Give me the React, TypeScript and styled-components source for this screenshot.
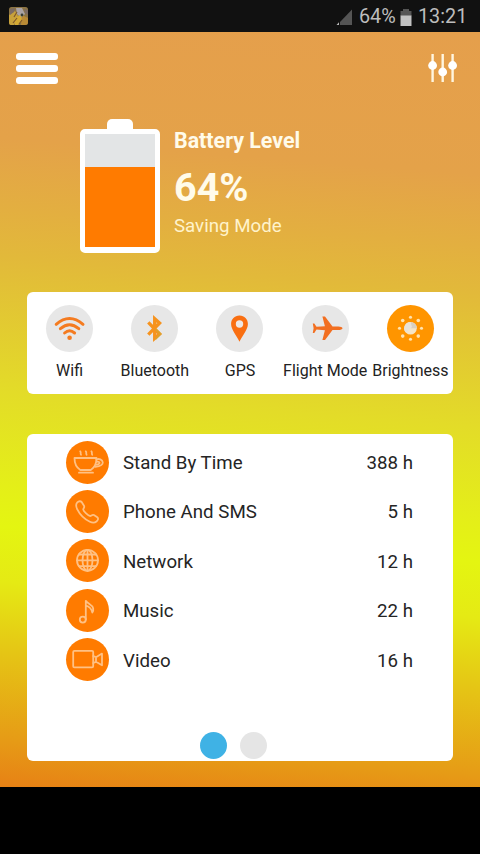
import React from 'react';
import styled, { createGlobalStyle } from 'styled-components';

const GlobalStyle = createGlobalStyle`
  * { box-sizing: border-box; }
  body {
    margin: 0;
    background: #000;
    font-family: Roboto, "Liberation Sans", sans-serif;
  }
  svg { display: block; }
`;

const Phone = styled.div`
  width: 480px;
  height: 854px;
  display: flex;
  flex-direction: column;
  background: #000;
  overflow: hidden;
`;

const StatusBar = styled.header`
  height: 32px;
  flex: none;
  display: flex;
  align-items: center;
  justify-content: space-between;
  padding: 0 13px 0 9px;
  background: #111;
`;

const StatusInfo = styled.div`
  display: flex;
  align-items: center;
  gap: 6px;
  color: #bdbdbd;
  font-size: 19.8px;
  line-height: 24px;
  padding-top: 2px;
`;

const StatusText = styled.span<{ $width: number }>`
  width: ${p => p.$width}px;
  white-space: nowrap;
`;

const Screen = styled.main`
  height: 755px;
  flex: none;
  display: flex;
  flex-direction: column;
  background: linear-gradient(
    184.3deg,
    #e59f4c 0%, #e4a249 18%, #e3af40 27%, #e2b93a 33%,
    #e3dc28 50%, #e4ef18 62%, #e4f511 67%, #e5ea14 74%,
    #e5c515 83%, #e69b16 94%, #e78115 100%
  );
`;

const Toolbar = styled.div`
  display: flex;
  justify-content: space-between;
  align-items: flex-start;
  padding: 21px 22px 0 16px;
  height: 86px;
`;

const MenuButton = styled.button`
  display: flex;
  flex-direction: column;
  gap: 5px;
  width: 42px;
  padding: 0;
  border: 0;
  background: none;
`;

const MenuLine = styled.span`
  height: 7px;
  border-radius: 3px;
  background: #fff;
`;

const LevelSection = styled.section`
  display: flex;
  gap: 13px;
  padding-left: 80px;
  height: 174px;
`;

const Battery = styled.div`
  display: flex;
  flex-direction: column;
  align-items: center;
  width: 80px;
`;

const BatteryCap = styled.div`
  width: 26px;
  height: 11px;
  margin-top: 1px;
  border-radius: 5px 5px 0 0;
  background: #fff;
`;

const BatteryBody = styled.div`
  width: 80px;
  height: 124px;
  margin-top: -1px;
  display: flex;
  align-items: flex-end;
  border: 5px solid #fff;
  border-bottom-width: 6px;
  border-radius: 5px;
  background: #e3e5e6;
`;

const BatteryFill = styled.div`
  width: 100%;
  height: 80px;
  background: #ff7b00;
`;

const LevelText = styled.div`
  display: flex;
  flex-direction: column;
  align-items: flex-start;
  padding: 10px 0 0 1px;
  color: #fffbea;
  white-space: nowrap;
`;

const LevelTitle = styled.div`
  font-size: 21.4px;
  line-height: 26px;
  font-weight: 700;
`;

const LevelValue = styled.div`
  font-size: 39.5px;
  line-height: 48px;
  font-weight: 700;
  margin-top: 10px;
`;

const LevelMode = styled.div`
  font-size: 18.7px;
  line-height: 24px;
  margin-top: 2px;
  color: #fff3cb;
`;

const Card = styled.section`
  width: 426px;
  margin: 0 27px;
  border-radius: 6px;
  background: #fff;
`;

const ToggleCard = styled(Card)`
  height: 102px;
  flex: none;
  display: grid;
  grid-template-columns: repeat(5, 1fr);
  padding-top: 13px;
`;

const Toggle = styled.div`
  min-width: 0;
  display: flex;
  flex-direction: column;
  align-items: center;
`;

const ToggleIcon = styled.div<{ $active?: boolean }>`
  width: 47px;
  height: 47px;
  display: flex;
  align-items: center;
  justify-content: center;
  border-radius: 50%;
  background: ${p => (p.$active ? '#ff9500' : '#e7e7e7')};
`;

const ToggleLabel = styled.div`
  margin-top: 9px;
  font-size: 16px;
  line-height: 20px;
  color: #222;
  white-space: nowrap;
`;

const UsageCard = styled(Card)`
  height: 327px;
  flex: none;
  margin-top: 40px;
  padding: 6.5px 40px 2px 39px;
  display: flex;
  flex-direction: column;
  justify-content: space-between;
`;

const UsageList = styled.div`
  display: grid;
  row-gap: 6.4px;
`;

const UsageRow = styled.div`
  height: 43px;
  display: grid;
  grid-template-columns: 57px 1fr auto;
  align-items: center;
  font-size: 18.7px;
  color: #252525;
`;

const UsageIcon = styled.div`
  width: 43px;
  height: 43px;
  display: flex;
  align-items: center;
  justify-content: center;
  border-radius: 50%;
  background: #ff7b00;
`;

const UsageText = styled.span`
  padding-top: 2px;
  white-space: nowrap;
`;

const Pager = styled.nav`
  display: flex;
  gap: 13px;
  padding-left: 134px;
`;

const PageDot = styled.span<{ $active?: boolean }>`
  width: 27px;
  height: 27px;
  border-radius: 50%;
  background: ${p => (p.$active ? '#3fb2e5' : '#e5e5e5')};
`;

const AppThumb = () => (
  <svg width="20" height="19" viewBox="0 0 20 19">
    <rect width="19" height="18" rx="2.5" fill="#8c7444" />
    <path d="M0 8 L6 4 L9 9 L5 18 H2 Q0 18 0 15Z" fill="#c8a23b" />
    <path d="M7 1h6l3 6-4 4-4-4z" fill="#aaa3a5" />
    <path d="M5 12l6-4 3 5-5 5H6z" fill="#d5aa34" />
    <path d="M13 8l6 3v4q0 3-3 3h-4z" fill="#b98a35" />
    <path d="M1 2l5-1-1 4-4 3zM15 2l4 1v5l-3-2z" fill="#7b6b63" />
    <path d="M5 10l3-5M4 16l4-5M10 17l3-4" stroke="#7d572c" strokeWidth="1.2" />
    <circle cx="13" cy="8" r="1.4" fill="#3a4035" />
  </svg>
);

const SignalGlyph = () => (
  <svg width="17" height="17" viewBox="0 0 17 17">
    <path d="M4 13 L16 0.5 V16 H4Z" fill="#555" />
    <path d="M0.5 16 L3 13.2 V16Z" fill="#bbb" />
  </svg>
);

const SmallBattery = () => (
  <svg width="12" height="17" viewBox="0 0 12 17">
    <path d="M3 0h6v2h2.5v5H0.5V2H3z" fill="#555" />
    <path d="M0.5 6.5h11V17H0.5z" fill="#c2c2c2" />
  </svg>
);

const SlidersGlyph = () => (
  <svg width="30" height="30" viewBox="0 0 30 30" fill="#fff">
    <path d="M4.6 1v28M14.7 1v28M24.6 1v28" stroke="#fff6df" strokeWidth="2.4" />
    <circle cx="4.6" cy="12.5" r="4.4" />
    <circle cx="14.7" cy="19" r="4.4" />
    <circle cx="24.6" cy="12.5" r="4.4" />
  </svg>
);

const WifiGlyph = () => (
  <svg width="47" height="47" viewBox="0 0 47 47" fill="none" stroke="#f47b20" strokeWidth="3" strokeLinecap="round">
    <path d="M10.2 19.3 Q23.5 7.7 37 19.3" />
    <path d="M14.4 23.7 Q23.5 15.7 32.8 23.7" />
    <path d="M18.6 28 Q23.5 23.6 28.6 28" />
    <circle cx="23.6" cy="32.8" r="2.3" fill="#f47b20" stroke="none" />
  </svg>
);

const BluetoothGlyph = () => (
  <svg width="47" height="47" viewBox="0 0 47 47" fill="none" strokeWidth="3.3">
    <path d="M17.3 17.4 L28.6 29 L23.7 33.4 V13.6 L28.6 18 L17.3 29.6" stroke="#f6931e" />
    <path d="M24.4 24 L29.6 29 L24.4 34.2" stroke="#dea12d" strokeWidth="1.8" />
  </svg>
);

const PinGlyph = () => (
  <svg width="47" height="47" viewBox="0 0 47 47">
    <path
      d="M23.5 10.5c-4.9 0-8.4 3.7-8.4 8.4 0 5.7 5.6 11.8 8.4 17.8 2.8-6 8.4-12.1 8.4-17.8 0-4.7-3.5-8.4-8.4-8.4z"
      fill="#f96f12"
    />
    <circle cx="23.5" cy="19" r="3.7" fill="#eee8e5" />
  </svg>
);

const PlaneGlyph = () => (
  <svg width="47" height="47" viewBox="0 0 47 47">
    <path
      d="M40.5 23.2c0-1.1-2.2-1.8-4-1.8h-6L23 11.6h-2.6l2.5 9.6-8.4.5-2.2-3.2h-1.5l.8 4.7-.8 4.8h1.5l2.2-3.4 8.4.6-2.5 9.8H23l7.5-9.9h6c1.8 0 4-.8 4-1.9z"
      fill="#f26f21"
    />
  </svg>
);

const sunRays = [0, 45, 90, 135, 180, 225, 270, 315].map(deg => {
  const a = (deg * Math.PI) / 180;
  return { x: 23.5 + Math.cos(a) * 11, y: 23.3 + Math.sin(a) * 11, r: deg % 90 ? 1.8 : 1.55 };
});

const SunGlyph = () => (
  <svg width="47" height="47" viewBox="0 0 47 47">
    <circle cx="23.5" cy="23.3" r="6.3" fill="#f5e5c7" />
    <path d="M23.5 23.3V17A6.3 6.3 0 0 1 29.8 23.3Z" fill="#d9cfc0" />
    <path d="M23.5 17A6.3 6.3 0 0 0 19.1 27.8L25 22Z" fill="#e8e2d8" />
    {sunRays.map((p, i) => (
      <circle key={i} cx={p.x} cy={p.y} r={p.r} fill="#ffe3b0" />
    ))}
  </svg>
);

const LineGlyph = styled.svg.attrs({ width: 43, height: 43, viewBox: '0 0 43 43' })`
  fill: none;
  stroke: #ffc184;
  stroke-width: 1.8;
  stroke-linejoin: round;
  stroke-linecap: round;
`;

const CupGlyph = () => (
  <LineGlyph>
    <path d="M8.5 17h22c0 5.5-1.6 9.3-5.7 12H14.3c-4.2-2.7-5.8-6.5-5.8-12z" />
    <path d="M13 31.7h14" />
    <path d="M30.5 18.6c2-1.5 6 .1 6.3 2.8.1 2.9-3.7 4-7.4 4.5M30.6 20.8c2-.5 3.3.4 2.8 1.5-.4.9-1.7 1.1-3.1 1.3" />
    <path d="M14.2 10.3c1.3 1.2-.3 2 .8 3.4M19.8 10.3c1.3 1.2-.3 2 .8 3.4M25.4 10.3c1.3 1.2-.3 2 .8 3.4" />
  </LineGlyph>
);

const PhoneGlyph = () => (
  <LineGlyph>
    <path d="M11.3 12.4c1.5-1.5 3.4-1.5 4.5-.2l2.2 3.5c1 1.9-.8 2.6-.8 3.8.2 1.7 5.2 6.5 6.9 6.5 1.3-.1 2.1-1.8 3.8-1l3.4 2.3c1.4 1.2.7 3-.8 4.2-1.8 1.5-4.1 1.5-6.6.3-5.4-2.7-9.9-6.9-12.6-12.4-1.3-2.6-1.6-5.3 0-7z" />
  </LineGlyph>
);

const GlobeGlyph = () => (
  <LineGlyph>
    <circle cx="21.5" cy="21.3" r="10.5" />
    <ellipse cx="21.5" cy="21.3" rx="5" ry="10.5" />
    <path d="M21.5 10.8v21M11 21.3h21M13 15.5h17M13 27.1h17" />
  </LineGlyph>
);

const NoteGlyph = () => (
  <LineGlyph>
    <circle cx="16.8" cy="30.6" r="3" />
    <path d="M19.8 30.5V11.8c1.7 3.1 6.5 3.5 7.4 7.7.3 1.5-.1 2.8-.9 4M19.8 16.5c3.1.9 5.7 3.3 6.5 6.8" />
  </LineGlyph>
);

const CameraGlyph = () => (
  <LineGlyph>
    <rect x="7.2" y="12.8" width="20" height="16.6" rx="1.2" />
    <path d="M27.2 18l2.8 1.2 6-3.6v11.7L30 23.8l-2.8 1.2M30 19.2v4.6" />
  </LineGlyph>
);

const toggles = [
  { label: 'Wifi', Icon: WifiGlyph },
  { label: 'Bluetooth', Icon: BluetoothGlyph },
  { label: 'GPS', Icon: PinGlyph },
  { label: 'Flight Mode', Icon: PlaneGlyph },
  { label: 'Brightness', Icon: SunGlyph, active: true },
];

const usage = [
  { label: 'Stand By Time', value: '388 h', Icon: CupGlyph },
  { label: 'Phone And SMS', value: '5 h', Icon: PhoneGlyph },
  { label: 'Network', value: '12 h', Icon: GlobeGlyph },
  { label: 'Music', value: '22 h', Icon: NoteGlyph },
  { label: 'Video', value: '16 h', Icon: CameraGlyph },
];

export default function App() {
  return (
    <Phone>
      <GlobalStyle />
      <StatusBar>
        <AppThumb />
        <StatusInfo>
          <SignalGlyph />
          <StatusText $width={35}>64%</StatusText>
          <SmallBattery />
          <StatusText $width={49}>13:21</StatusText>
        </StatusInfo>
      </StatusBar>
      <Screen>
        <Toolbar>
          <MenuButton aria-label="Menu">
            <MenuLine />
            <MenuLine />
            <MenuLine />
          </MenuButton>
          <SlidersGlyph />
        </Toolbar>
        <LevelSection>
          <Battery>
            <BatteryCap />
            <BatteryBody>
              <BatteryFill />
            </BatteryBody>
          </Battery>
          <LevelText>
            <LevelTitle>Battery Level</LevelTitle>
            <LevelValue>64%</LevelValue>
            <LevelMode>Saving Mode</LevelMode>
          </LevelText>
        </LevelSection>
        <ToggleCard>
          {toggles.map(({ label, Icon, active }) => (
            <Toggle key={label}>
              <ToggleIcon $active={active}>
                <Icon />
              </ToggleIcon>
              <ToggleLabel>{label}</ToggleLabel>
            </Toggle>
          ))}
        </ToggleCard>
        <UsageCard>
          <UsageList>
            {usage.map(({ label, value, Icon }) => (
              <UsageRow key={label}>
                <UsageIcon>
                  <Icon />
                </UsageIcon>
                <UsageText>{label}</UsageText>
                <UsageText>{value}</UsageText>
              </UsageRow>
            ))}
          </UsageList>
          <Pager>
            <PageDot $active />
            <PageDot />
          </Pager>
        </UsageCard>
      </Screen>
    </Phone>
  );
}
